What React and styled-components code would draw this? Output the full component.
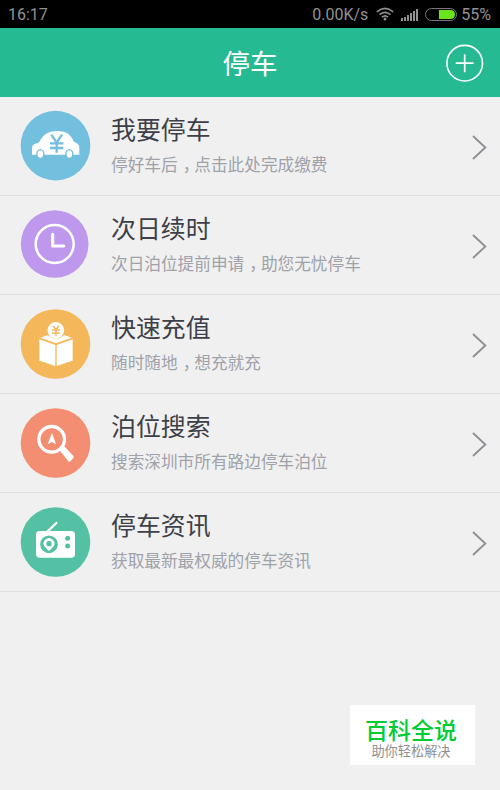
import React from "react";
import styled, { createGlobalStyle } from "styled-components";

const CarIcon = () => (
  <Icon viewBox="30 30 210 210">
    <circle cx="136.500" cy="137" r="104.500" fill="#72bfde" />
    <path
      d="M66 164V143Q66 135 74 132L86 128Q98 107 112 99Q124 93 142 93Q160 93 171 99Q182 105 192 125L203 131Q208 135 208 143V164Z"
      fill="#fff"
    />
    <ellipse cx="91" cy="162" rx="10.500" ry="13" fill="#fff" stroke="#72bfde" strokeWidth="4" />
    <ellipse cx="178" cy="162" rx="10.500" ry="13" fill="#fff" stroke="#72bfde" strokeWidth="4" />
    <path d="M124 104L140 128L156 104M140 126V158M120 130H160M120 144H160" fill="none" stroke="#72bfde" strokeWidth="7" />
  </Icon>
);

const ClockIcon = () => (
  <Icon viewBox="30 27 210 210">
    <circle cx="134" cy="132" r="101.500" fill="#bd98ed" />
    <circle cx="134" cy="132" r="57" fill="none" stroke="#fff" strokeWidth="7.500" />
    <path d="M128 103V138H161" fill="none" stroke="#fff" strokeWidth="9.500" strokeLinecap="round" strokeLinejoin="round" />
  </Icon>
);

const BoxIcon = () => (
  <Icon viewBox="30 24 210 210">
    <circle cx="136.500" cy="132" r="104.500" fill="#f4b759" />
    <path d="M88 118L136 135V198L88 182ZM188 118L140 135V198L188 182Z" fill="#fff" />
    <path d="M91 113L114 105Q122 116 138 116Q154 116 162 105L185 113L138 130Z" fill="#fff" />
    <circle cx="137.500" cy="91" r="25" fill="#fff" />
    <path d="M129 77L138 89L147 77M138 89V107M126 90H150M126 99H150" fill="none" stroke="#f4b759" strokeWidth="4.500" />
  </Icon>
);

const SearchIcon = () => (
  <Icon viewBox="30 27 210 210">
    <circle cx="136.500" cy="135" r="104.500" fill="#f38e73" />
    <circle cx="125" cy="124" r="38.500" fill="none" stroke="#fff" strokeWidth="10" />
    <path d="M150 149L161 160" stroke="#fff" strokeWidth="11" />
    <path d="M150 158L163 145L190 174Q192 177 190 180L181 190Q178 193 175 190Z" fill="#fff" />
    <path d="M126 104L138 139L126 132L113 139Z" fill="#fff" />
  </Icon>
);

const RadioIcon = () => (
  <Icon viewBox="30 27 210 210">
    <circle cx="136.500" cy="135" r="104.500" fill="#54c1a5" />
    <path d="M110 106L139 78" stroke="#fff" strokeWidth="7" strokeLinecap="round" />
    <rect x="78" y="102" width="117" height="80" rx="11" fill="#fff" />
    <circle cx="117" cy="142" r="26.500" fill="#54c1a5" />
    <path d="M117 162L104 149A16 16 0 1 1 130 149Z" fill="#fff" />
    <circle cx="117" cy="140" r="8" fill="#54c1a5" />
    <circle cx="173" cy="124" r="7.500" fill="#54c1a5" />
    <circle cx="173" cy="147" r="7.500" fill="#54c1a5" />
  </Icon>
);

const items = [
  { icon: CarIcon, title: "我要停车", text: "停好车后，点击此处完成缴费" },
  { icon: ClockIcon, title: "次日续时", text: "次日泊位提前申请，助您无忧停车" },
  { icon: BoxIcon, title: "快速充值", text: "随时随地，想充就充" },
  { icon: SearchIcon, title: "泊位搜索", text: "搜索深圳市所有路边停车泊位" },
  { icon: RadioIcon, title: "停车资讯", text: "获取最新最权威的停车资讯" },
];

// the comma sits in the middle of its cell
const withCommas = (text) =>
  text.split("，").map((part, index) => (
    <React.Fragment key={part}>
      {index > 0 && <Comma>，</Comma>}
      {part}
    </React.Fragment>
  ));

const StatusBar = () => (
  <Status>
    <span>16:17</span>
    <Indicators>
      <Speed>0.00K/s</Speed>
      <Wifi viewBox="0 0 18 14">
        <g fill="none" stroke="#919191" strokeWidth="1.600">
          <path d="M0.800 4.800Q9 -1.900 17.200 4.800" />
          <path d="M3.500 7.600Q9 3 14.500 7.600" />
          <path d="M6 10.200Q9 7.600 12 10.200" />
        </g>
        <circle cx="9" cy="12" r="1.500" fill="#919191" />
      </Wifi>
      <Signal>
        {[3, 4, 6, 8, 10, 12].map((height) => (
          <Bar key={height} $height={height} />
        ))}
      </Signal>
      <Battery>
        <Charge />
      </Battery>
      <Percent>55%</Percent>
    </Indicators>
  </Status>
);

const App = () => {
  return (
    <Screen>
      <GlobalStyle />
      <StatusBar />
      <Header>
        <HeaderTitle>停车</HeaderTitle>
        <AddButton aria-label="添加">
          <svg width="38" height="38" viewBox="0 0 38 38" fill="none" stroke="#fff">
            <circle cx="18.700" cy="19.200" r="17.800" strokeWidth="1.600" />
            <path d="M9.700 19.200H27.700M18.700 10.200V28.200" strokeWidth="1.700" />
          </svg>
        </AddButton>
      </Header>
      <List>
        {items.map(({ icon: ItemIcon, title, text }) => (
          <Row key={title}>
            <ItemIcon />
            <RowText>
              <Title>{title}</Title>
              <Text>{withCommas(text)}</Text>
            </RowText>
            <Arrow viewBox="0 0 16 26">
              <path d="M2 1L14.300 12.500L2 24" fill="none" stroke="#8c9095" strokeWidth="1.900" />
            </Arrow>
          </Row>
        ))}
      </List>
      <Watermark>
        <Brand>百科全说</Brand>
        <Slogan>助你轻松解决</Slogan>
      </Watermark>
    </Screen>
  );
};

export default App;

const GlobalStyle = createGlobalStyle`
  * {
    box-sizing: border-box;
  }

  body {
    margin: 0;
    background: #f0f0f0;
    font-family: "Noto Sans CJK SC", sans-serif;
  }
`;

const Screen = styled.div`
  position: relative;
  width: 500px;
  height: 790px;
  background: #f0f0f0;
  overflow: hidden;
`;

const Status = styled.div`
  display: flex;
  justify-content: space-between;
  align-items: center;
  height: 28px;
  padding: 1px 9px 0 8px;
  background: #000;
  color: #919191;
  font-family: Roboto, "Liberation Sans", sans-serif;
  font-size: 16px;
`;

const Indicators = styled.div`
  display: flex;
  align-items: center;
`;

const Speed = styled.span`
  margin-right: 8px;
`;

const Wifi = styled.svg`
  width: 18px;
  height: 14px;
  margin: 0 7px 1px 0;
`;

const Signal = styled.div`
  display: flex;
  align-items: flex-end;
  gap: 1px;
  height: 13px;
  margin: 0 7px 1px 0;
`;

const Bar = styled.div`
  width: 2px;
  height: ${({ $height }) => $height}px;
  background: #919191;
`;

const Battery = styled.div`
  display: flex;
  justify-content: flex-end;
  width: 32px;
  height: 13px;
  padding: 1px;
  border: 1px solid #777;
  border-radius: 7px;
`;

const Charge = styled.div`
  width: 16px;
  background: #69e51c;
  border-radius: 0 6px 6px 0;
`;

const Percent = styled.span`
  margin-left: 4px;
`;

const Header = styled.header`
  display: grid;
  grid-template-columns: 1fr auto 1fr;
  align-items: center;
  height: 69px;
  padding: 0 16px;
  background: #25ba91;
`;

const HeaderTitle = styled.h1`
  grid-column: 2;
  margin: 0 0 2px;
  color: #fff;
  font-size: 27.5px;
  font-weight: 400;
  line-height: 40px;
`;

const AddButton = styled.button`
  justify-self: end;
  display: flex;
  padding: 0;
  border: none;
  background: none;
`;

const List = styled.div`
  display: flex;
  flex-direction: column;
`;

const Row = styled.div`
  display: flex;
  align-items: flex-start;
  height: 99px;
  padding: 13px 13px 0 20px;
  border-bottom: 1px solid #dedede;
`;

const Icon = styled.svg`
  flex: none;
  width: 70px;
  height: 70px;
  overflow: visible;
`;

const RowText = styled.div`
  flex: 1;
  padding-left: 21px;
`;

const Title = styled.h2`
  margin: 0;
  color: #3d4048;
  font-size: 24.9px;
  font-weight: 400;
  line-height: 36px;
`;

const Text = styled.p`
  margin: 4px 0 0;
  color: #9fa2a9;
  font-size: 16.67px;
  line-height: 28px;
  white-space: nowrap;
`;

const Comma = styled.span`
  display: inline-block;
  width: 1em;
  padding-left: 5px;
  font-feature-settings: "halt";
`;

const Arrow = styled.svg`
  width: 16px;
  height: 26px;
  margin-top: 25px;
`;

const Watermark = styled.div`
  position: absolute;
  right: 25px;
  bottom: 25px;
  display: flex;
  flex-direction: column;
  align-items: center;
  width: 125px;
  height: 60px;
  padding: 10px 3px 0 0;
  background: #fff;
`;

const Brand = styled.div`
  color: #00cc33;
  font-size: 23px;
  font-weight: 500;
  line-height: 28px;
`;

const Slogan = styled.div`
  color: #8f8f8f;
  font-size: 13.2px;
  line-height: 16px;
`;
